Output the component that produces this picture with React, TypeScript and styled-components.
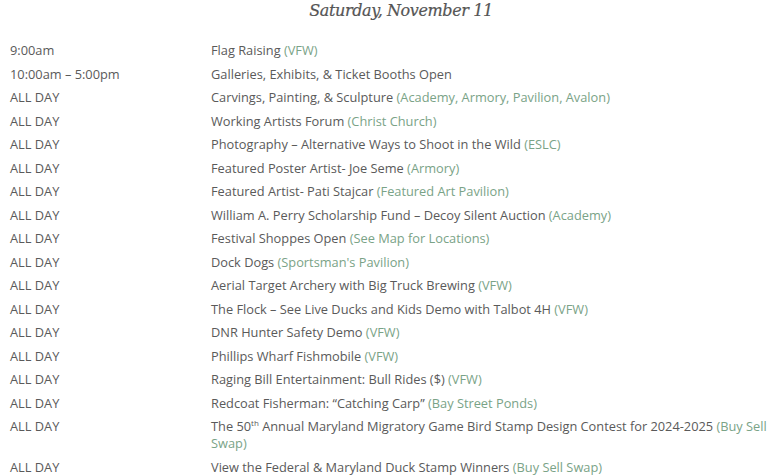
import React from "react";
import styled, { createGlobalStyle } from "styled-components";

const Global = createGlobalStyle`
  html, body { margin: 0; padding: 0; background: #fff; }
  body { font-family: "Open Sans", "Liberation Sans", sans-serif; }
`;

const Page = styled.div`
  padding: 0 0 0 10px;
  width: 768px;
  box-sizing: border-box;
`;

const Title = styled.h2`
  margin: 0;
  padding: 0 0 0 24px;
  height: 39px;
  box-sizing: border-box;
  text-align: center;
  font-family: "DejaVu Serif", serif;
  font-style: italic;
  font-weight: 400;
  font-size: 16px;
  line-height: 21px;
  color: #555;
  letter-spacing: -0.4px;
  -webkit-text-stroke: 0.2px #555;
`;

const List = styled.div`
  display: flex;
  flex-direction: column;
`;

const Row = styled.div`
  display: grid;
  grid-template-columns: 201px 1fr;
  padding: 3px 0 3.5px;
  font-size: 12.8px;
  line-height: 17px;
  color: #5a5a5a;
`;

const Time = styled.div``;

const Desc = styled.div``;

const Loc = styled.span`
  color: #7aa387;
`;

const Sup = styled.sup`
  font-size: 8px;
  vertical-align: 5px;
  line-height: 0;
`;

type Item = { time: string; text: React.ReactNode; loc?: string };

const items: Item[] = [
  { time: "9:00am", text: "Flag Raising", loc: "VFW" },
  { time: "10:00am – 5:00pm", text: "Galleries, Exhibits, & Ticket Booths Open" },
  { time: "ALL DAY", text: "Carvings, Painting, & Sculpture", loc: "Academy, Armory, Pavilion, Avalon" },
  { time: "ALL DAY", text: "Working Artists Forum", loc: "Christ Church" },
  { time: "ALL DAY", text: "Photography – Alternative Ways to Shoot in the Wild", loc: "ESLC" },
  { time: "ALL DAY", text: "Featured Poster Artist- Joe Seme", loc: "Armory" },
  { time: "ALL DAY", text: "Featured Artist- Pati Stajcar", loc: "Featured Art Pavilion" },
  { time: "ALL DAY", text: "William A. Perry Scholarship Fund – Decoy Silent Auction", loc: "Academy" },
  { time: "ALL DAY", text: "Festival Shoppes Open", loc: "See Map for Locations" },
  { time: "ALL DAY", text: "Dock Dogs", loc: "Sportsman's Pavilion" },
  { time: "ALL DAY", text: "Aerial Target Archery with Big Truck Brewing", loc: "VFW" },
  { time: "ALL DAY", text: "The Flock – See Live Ducks and Kids Demo with Talbot 4H", loc: "VFW" },
  { time: "ALL DAY", text: "DNR Hunter Safety Demo", loc: "VFW" },
  { time: "ALL DAY", text: "Phillips Wharf Fishmobile", loc: "VFW" },
  { time: "ALL DAY", text: "Raging Bill Entertainment: Bull Rides ($)", loc: "VFW" },
  { time: "ALL DAY", text: "Redcoat Fisherman: “Catching Carp”", loc: "Bay Street Ponds" },
  {
    time: "ALL DAY",
    text: (
      <>
        The 50<Sup>th</Sup> Annual Maryland Migratory Game Bird Stamp Design Contest for 2024-2025
      </>
    ),
    loc: "Buy Sell Swap",
  },
  { time: "ALL DAY", text: "View the Federal & Maryland Duck Stamp Winners", loc: "Buy Sell Swap" },
];

export default function App() {
  return (
    <Page>
      <Global />
      <Title>Saturday, November 11</Title>
      <List>
        {items.map((it, i) => (
          <Row key={i}>
            <Time>{it.time}</Time>
            <Desc>
              {it.text}
              {it.loc && <Loc> ({it.loc})</Loc>}
            </Desc>
          </Row>
        ))}
      </List>
    </Page>
  );
}
